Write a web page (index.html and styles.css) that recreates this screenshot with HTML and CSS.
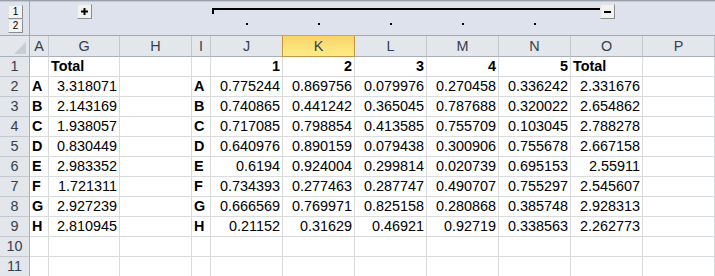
FILE: index.html
```html
<!DOCTYPE html>
<html>
<head>
<meta charset="utf-8">
<link rel="stylesheet" href="styles.css">
</head>
<body>
<div class="outline">
  <div class="levels">
    <div class="lvl">1</div>
    <div class="lvl">2</div>
  </div>
  <div class="obtn plus-cell"><svg width="7" height="7" viewBox="0 0 7 7"><rect x="2.5" y="0" width="2" height="7" fill="#000"/><rect x="0" y="2.5" width="7" height="2" fill="#000"/></svg></div>
  <div class="bracket"></div>
  <div class="dot d-j"></div>
  <div class="dot d-k"></div>
  <div class="dot d-l"></div>
  <div class="dot d-m"></div>
  <div class="dot d-n"></div>
  <div class="obtn minus-cell"><svg width="7" height="2" viewBox="0 0 7 2"><rect x="0" y="0" width="7" height="2" fill="#000"/></svg></div>
</div>
<div class="sheet">
  <div class="ch corner"><svg width="12" height="12" viewBox="0 0 12 12"><polygon points="12,0 12,12 0,12" fill="#c9ccd2"/></svg></div>
  <div class="ch">A</div><div class="ch">G</div><div class="ch">H</div><div class="ch">I</div><div class="ch">J</div><div class="ch sel">K</div><div class="ch">L</div><div class="ch">M</div><div class="ch">N</div><div class="ch">O</div><div class="ch">P</div>

  <div class="rh">1</div><div class="c"></div><div class="c b">Total</div><div class="c"></div><div class="c"></div><div class="c b r">1</div><div class="c b r">2</div><div class="c b r">3</div><div class="c b r">4</div><div class="c b r">5</div><div class="c b">Total</div><div class="c"></div>

  <div class="rh">2</div><div class="c b">A</div><div class="c r">3.318071</div><div class="c"></div><div class="c b">A</div><div class="c r">0.775244</div><div class="c r">0.869756</div><div class="c r">0.079976</div><div class="c r">0.270458</div><div class="c r">0.336242</div><div class="c r">2.331676</div><div class="c"></div>

  <div class="rh">3</div><div class="c b">B</div><div class="c r">2.143169</div><div class="c"></div><div class="c b">B</div><div class="c r">0.740865</div><div class="c r">0.441242</div><div class="c r">0.365045</div><div class="c r">0.787688</div><div class="c r">0.320022</div><div class="c r">2.654862</div><div class="c"></div>

  <div class="rh">4</div><div class="c b">C</div><div class="c r">1.938057</div><div class="c"></div><div class="c b">C</div><div class="c r">0.717085</div><div class="c r">0.798854</div><div class="c r">0.413585</div><div class="c r">0.755709</div><div class="c r">0.103045</div><div class="c r">2.788278</div><div class="c"></div>

  <div class="rh">5</div><div class="c b">D</div><div class="c r">0.830449</div><div class="c"></div><div class="c b">D</div><div class="c r">0.640976</div><div class="c r">0.890159</div><div class="c r">0.079438</div><div class="c r">0.300906</div><div class="c r">0.755678</div><div class="c r">2.667158</div><div class="c"></div>

  <div class="rh">6</div><div class="c b">E</div><div class="c r">2.983352</div><div class="c"></div><div class="c b">E</div><div class="c r">0.6194</div><div class="c r">0.924004</div><div class="c r">0.299814</div><div class="c r">0.020739</div><div class="c r">0.695153</div><div class="c r">2.55911</div><div class="c"></div>

  <div class="rh">7</div><div class="c b">F</div><div class="c r">1.721311</div><div class="c"></div><div class="c b">F</div><div class="c r">0.734393</div><div class="c r">0.277463</div><div class="c r">0.287747</div><div class="c r">0.490707</div><div class="c r">0.755297</div><div class="c r">2.545607</div><div class="c"></div>

  <div class="rh">8</div><div class="c b">G</div><div class="c r">2.927239</div><div class="c"></div><div class="c b">G</div><div class="c r">0.666569</div><div class="c r">0.769971</div><div class="c r">0.825158</div><div class="c r">0.280868</div><div class="c r">0.385748</div><div class="c r">2.928313</div><div class="c"></div>

  <div class="rh">9</div><div class="c b">H</div><div class="c r">2.810945</div><div class="c"></div><div class="c b">H</div><div class="c r">0.21152</div><div class="c r">0.31629</div><div class="c r">0.46921</div><div class="c r">0.92719</div><div class="c r">0.338563</div><div class="c r">2.262773</div><div class="c"></div>

  <div class="rh">10</div><div class="c"></div><div class="c"></div><div class="c"></div><div class="c"></div><div class="c"></div><div class="c"></div><div class="c"></div><div class="c"></div><div class="c"></div><div class="c"></div><div class="c"></div>

  <div class="rh">11</div><div class="c"></div><div class="c"></div><div class="c"></div><div class="c"></div><div class="c"></div><div class="c"></div><div class="c"></div><div class="c"></div><div class="c"></div><div class="c"></div><div class="c"></div>
</div>
</body>
</html>
```
FILE: styles.css
```css
html, body {
  margin: 0;
  padding: 0;
  background: #ffffff;
}
body {
  width: 715px;
  height: 276px;
  overflow: hidden;
  font-family: "Liberation Sans", Arial, sans-serif;
  font-size: 14.4px;
  color: #000;
}
.outline {
  display: grid;
  grid-template-columns: 30px 19px 71px 72px 19px repeat(7, 72px);
  grid-template-rows: 34px;
  height: 36px;
  box-sizing: border-box;
  background: #dee2ed;
  border-top: 1px solid #9aa0aa;
  border-bottom: 1px solid #a3a8b1;
  box-shadow: inset 0 1px 0 #c4c9d3;
}
.levels {
  grid-column: 1;
  grid-row: 1;
  border-right: 1px solid #a3a8b1;
  display: flex;
  flex-direction: column;
  align-items: flex-start;
  padding: 4px 0 0 8px;
}
.lvl {
  width: 15px;
  height: 14px;
  box-sizing: border-box;
  background: #f3f3f3;
  border: 1px solid;
  border-color: #e2e2e2 #8c8c8c #8c8c8c #e2e2e2;
  font-size: 10px;
  line-height: 12px;
  text-align: center;
  color: #000;
}
.obtn {
  grid-row: 1;
  width: 15px;
  height: 15px;
  box-sizing: border-box;
  background: #f1f1f1;
  border: 1px solid;
  border-color: #e4e4e4 #8c8c8c #8c8c8c #e4e4e4;
  justify-self: center;
  align-self: start;
  margin-top: 3px;
  display: flex;
  align-items: center;
  justify-content: center;
  z-index: 2;
}
.obtn svg { display: block; }
.plus-cell { grid-column: 3; }
.minus-cell { grid-column: 11; }
.bracket {
  grid-column: 6 / 12;
  grid-row: 1;
  align-self: start;
  margin: 7px 36px 0 1px;
  height: 6px;
  box-sizing: border-box;
  border-top: 2px solid #000;
  border-left: 2px solid #000;
}
.dot {
  grid-row: 1;
  width: 2px;
  height: 2px;
  background: #000;
  justify-self: center;
  align-self: start;
  margin-top: 22px;
}
.d-j { grid-column: 6; }
.d-k { grid-column: 7; }
.d-l { grid-column: 8; }
.d-m { grid-column: 9; }
.d-n { grid-column: 10; }

.sheet {
  display: grid;
  grid-template-columns: 30px 19px 71px 72px 19px repeat(7, 72px);
  grid-auto-rows: 20px;
  grid-template-rows: 21px;
}
.ch {
  box-sizing: border-box;
  background: #e3e6eb;
  border-right: 1px solid #c4c8ce;
  border-bottom: 1px solid #a9afb8;
  text-align: center;
  line-height: 19px;
  padding-top: 1px;
  color: #34404f;
}
.ch.corner {
  border-right: 1px solid #a9afb8;
  display: flex;
  align-items: flex-end;
  justify-content: flex-end;
  padding: 0 3px 2px 0;
}
.ch.corner svg { display: block; }
.ch.sel {
  background: linear-gradient(#f8d26a, #fde47c 60%, #ffeb86);
  border-right-color: #c6953f;
  border-bottom-color: #c6953f;
  box-shadow: -1px 0 0 #c6953f;
}
.rh {
  box-sizing: border-box;
  background: #e3e6eb;
  border-right: 1px solid #a9afb8;
  border-bottom: 1px solid #c4c8ce;
  text-align: center;
  line-height: 19px;
  color: #34404f;
}
.c {
  box-sizing: border-box;
  border-right: 1px solid #d9dbdd;
  border-bottom: 1px solid #d9dbdd;
  line-height: 19px;
  padding: 0 2px;
  white-space: nowrap;
  overflow: hidden;
}
.b { font-weight: bold; }
.r { text-align: right; }
```
